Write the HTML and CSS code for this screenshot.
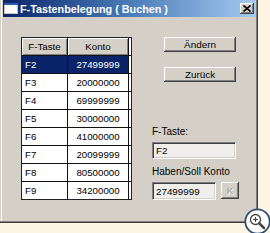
FILE: index.html
```html
<!DOCTYPE html>
<html>
<head>
<meta charset="utf-8">
<link rel="stylesheet" href="styles.css">
</head>
<body>
<div class="window">
  <div class="titlebar">
    <svg class="app-icon" width="14" height="11" viewBox="0 0 14 11">
      <rect x="0.5" y="0.5" width="13" height="10" fill="#fff" stroke="#c8c8c8"/>
      <rect x="0" y="0" width="14" height="2" fill="#2a5ca8"/>
    </svg>
    <span class="title">F-Tastenbelegung ( Buchen )</span>
    <span class="close">
      <svg width="8" height="7" viewBox="0 0 8 7"><path d="M0.5 0.5 L7.5 6.5 M7.5 0.5 L0.5 6.5" stroke="#000" stroke-width="1.6"/></svg>
    </span>
  </div>
  <div class="client">
    <div class="grid">
      <div class="hd">F-Taste</div><div class="hd">Konto</div><div class="pad"></div>
      <div class="c key sel">F2</div><div class="c num sel">27499999</div><div class="pad"></div>
      <div class="c key">F3</div><div class="c num">20000000</div><div class="pad"></div>
      <div class="c key">F4</div><div class="c num">69999999</div><div class="pad"></div>
      <div class="c key">F5</div><div class="c num">30000000</div><div class="pad"></div>
      <div class="c key">F6</div><div class="c num">41000000</div><div class="pad"></div>
      <div class="c key">F7</div><div class="c num">20099999</div><div class="pad"></div>
      <div class="c key">F8</div><div class="c num">80500000</div><div class="pad"></div>
      <div class="c key">F9</div><div class="c num">34200000</div><div class="pad"></div>
    </div>
    <div class="side">
      <button class="btn wide">Ändern</button>
      <button class="btn wide second">Zurück</button>
      <div class="lbl first">F-Taste:</div>
      <div class="field f1">F2</div>
      <div class="lbl">Haben/Soll Konto</div>
      <div class="row">
        <div class="field f2">27499999</div>
        <button class="btn k" disabled>K</button>
      </div>
    </div>
  </div>
</div>
<svg class="zoom-badge" width="27" height="27" viewBox="0 0 27 27">
  <circle cx="13.5" cy="13.5" r="12.2" fill="#ffffff" stroke="#2f4e70" stroke-width="1.8"/>
  <circle cx="11.5" cy="11.5" r="5" fill="#fff" stroke="#444" stroke-width="1.3"/>
  <path d="M9 11.5 H14 M11.5 9 V14" stroke="#444" stroke-width="1.2"/>
  <path d="M15.3 15.3 L20 20" stroke="#444" stroke-width="2.6" stroke-linecap="round"/>
</svg>
</body>
</html>
```
FILE: styles.css
```css
html, body {
  margin: 0;
  padding: 0;
}
body {
  background: #fdf5e2;
  width: 270px;
  height: 233px;
  overflow: hidden;
  position: relative;
  font-family: "Liberation Sans", Arial, sans-serif;
  font-size: 9.7px;
  color: #000;
}
.window {
  width: 258px;
  height: 223px;
  box-sizing: border-box;
  background: #d4d0c8;
  padding: 0 2px 3px 3px;
  box-shadow: inset -1px -1px #404040, inset -2px -2px #808080, inset 1px 0 #d4d0c8, inset 2px 0 #ffffff;
  display: flex;
  flex-direction: column;
}
.titlebar {
  height: 17px;
  display: flex;
  align-items: center;
  background: linear-gradient(to right, #0a246a 0%, #4a7cb8 50%, #a6caf0 100%);
  color: #fff;
}
.app-icon {
  margin-left: 1px;
  display: block;
}
.title {
  margin-left: 2px;
  font-weight: bold;
  font-size: 10.8px;
  white-space: nowrap;
  flex: 1;
}
.close {
  width: 14px;
  height: 11px;
  margin-right: 2px;
  background: #d4d0c8;
  box-shadow: inset -1px -1px #404040, inset 1px 1px #ffffff, inset -2px -2px #808080;
  display: flex;
  align-items: center;
  justify-content: center;
}
.close svg { display: block; }
.client {
  flex: 1;
  display: flex;
  align-items: flex-start;
  padding: 20px 0 0 18px;
}
.grid {
  display: grid;
  grid-template-columns: 45px 60px 2px;
  grid-auto-rows: 17px;
  gap: 1px;
  background: #111;
  border: 1px solid #222;
}
.hd {
  background: #d4d0c8;
  box-shadow: inset 1px 1px #ffffff, inset -1px -1px #808080;
  display: flex;
  align-items: center;
  justify-content: center;
}
.c {
  background: #fff;
  display: flex;
  align-items: center;
}
.key { padding-left: 3px; }
.num { justify-content: center; }
.sel {
  background: #0a246a;
  color: #fff;
}
.pad { background: #fff; }
.side {
  margin-left: 20px;
  display: flex;
  flex-direction: column;
  align-items: flex-start;
}
.btn {
  font-family: inherit;
  font-size: 9.9px;
  color: #000;
  background: #d4d0c8;
  border: 0;
  padding: 0;
  margin: 0;
  box-shadow: inset -1px -1px #404040, inset 1px 1px #ffffff, inset -2px -2px #808080;
}
.wide {
  width: 72px;
  height: 15px;
  margin-left: 12px;
}
.second { margin-top: 15px; }
.lbl {
  font-size: 10px;
  line-height: 12px;
}
.lbl.first { margin-top: 44px; }
.field {
  box-sizing: border-box;
  height: 17px;
  background: #efeeeb;
  border: 1px solid;
  border-color: #808080 #ffffff #ffffff #808080;
  box-shadow: inset 1px 1px #404040, inset -1px -1px #d4d0c8;
  padding-left: 3px;
  display: flex;
  align-items: center;
  font-size: 9.8px;
}
.f1 {
  width: 84px;
  margin-top: 4px;
  margin-bottom: 7px;
}
.row {
  display: flex;
  margin-top: 4px;
}
.f2 {
  width: 64px;
  height: 18px;
}
.k {
  width: 18px;
  height: 17px;
  margin-left: 5px;
  color: #9a9890;
  text-shadow: 1px 1px #ffffff;
}
.zoom-badge {
  position: absolute;
  left: 244px;
  top: 208px;
}
```
